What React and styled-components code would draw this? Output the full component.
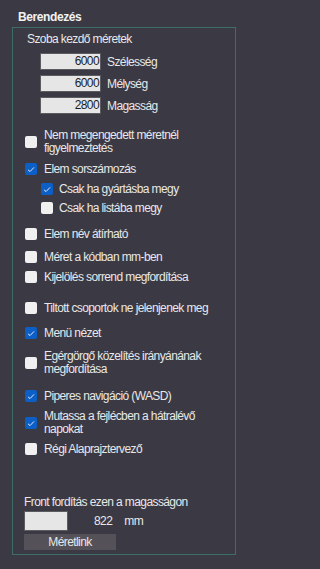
import React from "react";
import styled, { createGlobalStyle } from "styled-components";

const GlobalStyle = createGlobalStyle`
  html, body {
    margin: 0;
    padding: 0;
    background: #3b3a44;
  }
  body {
    font-family: "Liberation Sans", Arial, sans-serif;
    font-size: 12px;
    letter-spacing: -0.6px;
    color: #e8e8e8;
  }
`;

const Page = styled.div`
  width: 250px;
  height: 569px;
  padding: 9px 14px 0 12px;
  box-sizing: border-box;
  background: #3b3a44;
`;

const Title = styled.div`
  height: 16px;
  line-height: 16px;
  padding-left: 6px;
  margin-bottom: 2px;
  font-weight: bold;
  font-size: 12px;
  letter-spacing: -0.4px;
  color: #f2f2f2;
`;

const GroupBox = styled.div`
  border: 1px solid #3d6d69;
  height: 528px;
  box-sizing: border-box;
  display: flex;
  flex-direction: column;
`;

const SectionLabel = styled.div`
  height: 16px;
  line-height: 16px;
  margin-top: ${(p) => p.top || 0}px;
  padding-left: ${(p) => p.left || 0}px;
`;

const DimList = styled.div`
  display: flex;
  flex-direction: column;
  gap: 5px;
  margin-top: 6px;
  padding-left: 27px;
`;

const DimRow = styled.div`
  display: flex;
  align-items: center;
  gap: 6px;
  height: 17px;
`;

const NumBox = styled.div`
  width: ${(p) => p.w || 61}px;
  height: ${(p) => p.h || 17}px;
  box-sizing: border-box;
  background: #e6e6e6;
  border: 1px solid #5c5c60;
  color: #1c1c1c;
  text-align: right;
  padding-right: 1px;
  line-height: ${(p) => (p.h || 17) - 2}px;
  font-size: 12px;
  letter-spacing: -0.6px;
`;

const CheckList = styled.div`
  display: flex;
  flex-direction: column;
  margin-top: 15px;
  padding-left: 12px;
`;

const CheckRow = styled.div`
  display: flex;
  align-items: center;
  gap: ${(p) => (p.indent ? 6 : 7)}px;
  min-height: 16px;
  margin-top: ${(p) => p.top || 0}px;
  padding-left: ${(p) => (p.indent ? 16 : 0)}px;
  line-height: 13px;
`;

const Box = styled.span`
  flex: none;
  width: 12px;
  height: 12px;
  border-radius: 2px;
  box-sizing: border-box;
  background: ${(p) => (p.checked ? "#0b5fc6" : "#f0f0f0")};
  display: flex;
  align-items: center;
  justify-content: center;
`;

const Footer = styled.div`
  display: flex;
  flex-direction: column;
  margin-top: 37px;
  padding-left: 11px;
`;

const HeightRow = styled.div`
  display: flex;
  align-items: center;
  margin-top: 1px;
  height: 20px;
`;

const Value = styled.span`
  margin-left: ${(p) => p.left}px;
`;

const Button = styled.div`
  width: 92px;
  height: 16px;
  margin-top: 3px;
  background: #545258;
  color: #e8e8e8;
  text-align: center;
  line-height: 16px;
`;

const Check = () => (
  <svg width="8" height="7" viewBox="0 0 8 7">
    <polyline points="1,3.8 3,5.6 7,1.4" fill="none" stroke="#dfe8f5" strokeWidth="1" />
  </svg>
);

const Option = ({ checked, indent, top, children }) => (
  <CheckRow indent={indent} top={top}>
    <Box checked={checked}>{checked && <Check />}</Box>
    <span>{children}</span>
  </CheckRow>
);

const dims = [
  ["6000", "Szélesség"],
  ["6000", "Mélység"],
  ["2800", "Magasság"],
];

export default function App() {
  return (
    <>
      <GlobalStyle />
      <Page>
        <Title>Berendezés</Title>
        <GroupBox>
          <SectionLabel top={3} left={14}>Szoba kezdő méretek</SectionLabel>
          <DimList>
            {dims.map(([v, l]) => (
              <DimRow key={l}>
                <NumBox>{v}</NumBox>
                <span>{l}</span>
              </DimRow>
            ))}
          </DimList>

          <CheckList>
            <Option>
              Nem megengedett méretnél
              <br />
              figyelmeztetés
            </Option>
            <Option checked top={6}>Elem sorszámozás</Option>
            <Option checked indent top={4}>Csak ha gyártásba megy</Option>
            <Option indent top={3}>Csak ha listába megy</Option>
            <Option top={10}>Elem név átírható</Option>
            <Option top={7}>Méret a kódban mm-ben</Option>
            <Option top={4}>Kijelölés sorrend megfordítása</Option>
            <Option top={15}>Tiltott csoportok ne jelenjenek meg</Option>
            <Option checked top={9}>Menü nézet</Option>
            <Option top={9}>
              Egérgörgő közelítés irányánának
              <br />
              megfordítása
            </Option>
            <Option checked top={12}>Piperes navigáció (WASD)</Option>
            <Option checked top={6}>
              Mutassa a fejlécben a hátralévő
              <br />
              napokat
            </Option>
            <Option top={5}>Régi Alaprajztervező</Option>
          </CheckList>

          <Footer>
            <SectionLabel>Front fordítás ezen a magasságon</SectionLabel>
            <HeightRow>
              <NumBox w={44} h={20} />
              <Value left={26}>822</Value>
              <Value left={12}>mm</Value>
            </HeightRow>
            <Button>Méretlink</Button>
          </Footer>
        </GroupBox>
      </Page>
    </>
  );
}
